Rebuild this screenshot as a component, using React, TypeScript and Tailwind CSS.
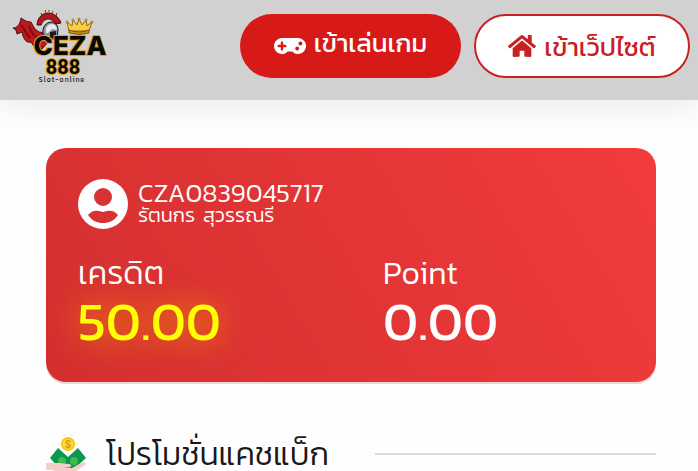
import React from 'react';
import { FaGamepad, FaHome } from 'react-icons/fa';

const Logo: React.FC = () => (
  <svg viewBox="0 0 96 76" className="h-[76px] w-24" role="img" aria-label="CEZA 888 Slot-online">
    {/* cape */}
    <path
      d="M1 18c4 0 7-3 8-10 4 3 7 4 10 4 2 4 4 8 8 10l8 1 3 7-8 9c-5 1-8-2-11-7-4 1-6-1-8-6l-1-4-5 2-1-4z"
      fill="#c0171e"
      stroke="#4a1210"
    />
    <path d="M9 15c3 3 5 9 9 13M17 16c2 7 5 11 10 12" fill="none" stroke="#7c0d13" strokeWidth="2" />
    {/* helmet */}
    <path d="M31 24c-1-7 3-12 9-12 4 0 6 4 6 8l-1 9h-9z" fill="#8d9296" stroke="#151515" />
    <path d="M34 23c-1-6 2-9 6-9 3 0 5 3 5 6l-5-1-4 4z" fill="#e8ebed" />
    <path d="M38 22l6-1v7h-6z" fill="#17191b" />
    {/* crest */}
    <path d="M25 15C26 0 44-1 49 13l-6 1C40 7 32 7 29 15z" fill="#b5161c" stroke="#3a0c0c" />
    <path d="M29 3l1 3M33 0l1 3M37 0v2M41 1l-1 2M45 3l-1 3" stroke="#6b3a0c" />
    {/* crown */}
    <path d="M57 21l-2-9 5 4 1-6 4 5 2-6 3 6 4-5 1 6 5-4-3 9z" fill="#f8cf3e" stroke="#94650d" />
    <path d="M57 20q10 4 20 0v3q-10 3-20 0z" fill="#d49618" stroke="#765008" />
    <g fill="#fbe27a" stroke="#a87512">
      <circle cx="55" cy="12" r="1" />
      <circle cx="61" cy="10" r="1" />
      <circle cx="67" cy="9" r="1" />
      <circle cx="74" cy="10" r="1" />
      <circle cx="80" cy="12" r="1" />
    </g>
    <g textAnchor="middle" strokeLinejoin="round" fill="#080808" stroke="#e2a41c" strokeWidth="2" paintOrder="stroke">
      <text x="58" y="45" fontFamily="Inter, sans-serif" fontSize="26" fontWeight="800">CEZA</text>
      <text x="51" y="64" fontFamily="Roboto, sans-serif" fontSize="20" fontWeight="700">888</text>
    </g>
    <text x="50" y="72" fontFamily="Kanit, Inter, sans-serif" fontSize="7" textAnchor="middle" fill="#161616" letterSpacing="1">Slot-online</text>
  </svg>
);

const UserIcon: React.FC = () => (
  <svg viewBox="0 0 50 50" className="size-[50px] shrink-0" aria-hidden="true">
    <path
      fill="white"
      fillRule="evenodd"
      d="M25 0a25 25 0 1 0 0 50a25 25 0 0 0 0-50zM25 9a9 9 0 1 1 0 18a9 9 0 0 1 0-18zM10 36c3-4 7-5 11-4l4 1 4-1c4-1 8 0 11 4c-4 6-9 8-15 8s-11-2-15-8z"
    />
  </svg>
);

const CashbackIcon: React.FC = () => (
  <svg viewBox="0 0 42 38" className="h-[38px] w-[42px] shrink-0" aria-hidden="true">
    <path d="M4 23l8-10 10 9 10-9 8 10-13 12H15z" fill="#07974f" />
    <circle cx="16" cy="26" r="4" fill="#43b94a" />
    <circle cx="28" cy="26" r="4" fill="#43b94a" />
    <path d="M0 28h13c4 0 6 1 10 1 3 0 3 3 0 3h-6l9 1 9-5c3-2 6 0 4 2L27 38H10l-4-3H0z" fill="#f4cfca" />
    <circle cx="22" cy="9" r="7" fill="#fbc514" />
    <circle cx="22" cy="9" r="5" fill="#ffdf3c" />
    <path d="M17 0h3M24 0h3M12 9h2M30 9h2" stroke="#fbe58a" />
    <text x="22" y="13" fontFamily="Inter, sans-serif" fontSize="10" fontWeight="700" textAnchor="middle" fill="#e49a0b">$</text>
  </svg>
);

const Balance: React.FC<{ label: string; value: string; glow?: boolean }> = ({ label, value, glow }) => (
  <div className="pl-8">
    <p className="text-[32px] leading-10 font-light">{label}</p>
    <p
      className={
        glow
          ? 'text-[54px] leading-[56px] text-[#ffff00] [text-shadow:0_0_32px_#f5a000]'
          : 'text-[54px] leading-[56px]'
      }
    >
      {value}
    </p>
  </div>
);

export default function App() {
  return (
    <div className="min-h-screen bg-[#fefefe] font-['Kanit','Inter','Noto_Sans_Thai',sans-serif] text-[#191919]">
      <header className="flex h-[100px] items-start justify-between bg-[#d1d1d1] pt-[14px] pr-2 pl-3 shadow-[0_4px_32px_#00000018]">
        <a href="#home" className="-mt-1">
          <Logo />
        </a>
        <nav className="flex gap-[13px]">
          <button className="flex h-16 w-[221px] items-center justify-center gap-2 rounded-full bg-[#d71a18] text-[26px] text-white">
            <FaGamepad className="size-8" />
            <span className="pb-2">เข้าเล่นเกม</span>
          </button>
          <button className="flex h-16 w-[216px] items-center justify-center gap-2 rounded-full border-2 border-[#c92024] bg-white text-[26px] text-[#c92024]">
            <FaHome className="size-7" />
            เข้าเว็ปไซต์
          </button>
        </nav>
      </header>

      <main className="pt-12 pr-[42px] pl-[46px]">
        <section className="rounded-[20px] bg-linear-60 from-[#d32f2f] to-[#f23b3c] pt-[31px] pb-[33px] text-white shadow-[0_2px_0_#efd5d5]">
          <div className="flex items-center gap-[10px] pl-8">
            <UserIcon />
            <div className="pb-[2px]">
              <p className="text-[26px] leading-6 font-light">CZA0839045717</p>
              <p className="flex gap-2 text-xl leading-5 font-light">
                <span>รัตนกร</span>
                <span>สุวรรณรี</span>
              </p>
            </div>
          </div>
          <div className="mt-6 grid grid-cols-2">
            <Balance label="เครดิต" value="50.00" glow />
            <Balance label="Point" value="0.00" />
          </div>
        </section>

        <div className="mt-[52px] flex items-center gap-[18px]">
          <CashbackIcon />
          <h2 className="text-[32px] leading-10 font-light">โปรโมชั่นแคชแบ็ก</h2>
          <hr className="ml-7 flex-1 border-t-2 border-[#dcdcdc]" />
        </div>
      </main>
    </div>
  );
}
